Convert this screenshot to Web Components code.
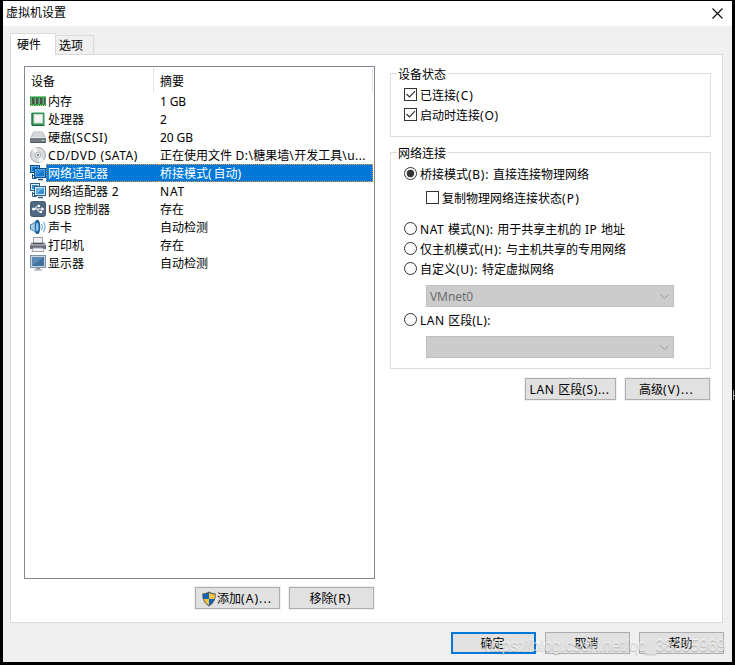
<!DOCTYPE html>
<html lang="zh-CN"><head><meta charset="utf-8"><title>虚拟机设置</title>
<style>html,body{margin:0;width:735px;height:665px;overflow:hidden;background:#000}
body{font:12px/16px "Noto Sans","Noto Sans CJK SC",sans-serif;color:#000}</style></head>
<body><vm-dialog></vm-dialog>
<script>
const define=(name,css,html,after)=>customElements.define(name,class extends HTMLElement{
  constructor(){super();this.attachShadow({mode:'open'})}
  connectedCallback(){
    this.shadowRoot.innerHTML='<style>*{box-sizing:border-box}:host{box-sizing:border-box}'+css+'</style>'+(typeof html==='function'?html(this):html);
    if(after)after(this);
  }
});
// Label whose Latin runs are spaced so that the whole label takes w pixels
define('ui-text',':host{display:inline-block;white-space:pre;flex:none;line-height:16px;height:16px}b{font-weight:inherit}',
 e=>e.getAttribute('t').replace(/[\x20-\x7e]+/g,m=>'<b>'+m+'</b>'),
 e=>{const w=+e.getAttribute('w');if(!w)return;
  const n=(e.getAttribute('t').match(/[\x20-\x7e]/g)||[]).length;
  if(!n)return;
  const s=(w-e.getBoundingClientRect().width)/n;
  e.shadowRoot.querySelectorAll('b').forEach(b=>b.style.letterSpacing=s+'px');});

const netIcon=(edge,light,mid,screen)=>`<rect x=".5" y=".5" width="9" height="7" fill="${light}" stroke="${edge}"/><rect x="2" y="2" width="6" height="4" fill="${mid}"/><path d="M2.500 9v4.500h4M2.500 10.500h2" stroke="${edge}" fill="none"/><rect x="4.500" y="3.500" width="11" height="9" fill="${light}" stroke="${edge}"/><rect x="6" y="5" width="8" height="6" fill="${mid}"/><path d="M6 11V5h8z" fill="${screen}"/><path d="M8 14.500h5" stroke="${edge}" stroke-width="1.500"/>`;
const icons={
 mem:'<path d="M0 3h16v10H0z" fill="#2f9a4a"/><path d="M0 3.500h16" stroke="#7ccf83"/><path d="M1 5h3v6H1zm4 0h3v6H5zm4 0h3v6H9zm4 0h2v6h-2z" fill="#46544a"/><path d="M1.500 5v6M5.500 5v6M9.500 5v6M13.500 5v6" stroke="#87998a"/><path d="M1 12.500h4m1 0h9" stroke="#e0d98a" stroke-dasharray="1 1"/>',
 cpu:'<rect x="1.500" y="1.500" width="13" height="13" rx="1" fill="#2f9655"/><rect x="3.500" y="3" width="9.500" height="9.500" fill="#cfd8cf"/><rect x="4.500" y="4" width="7.500" height="7.500" fill="#f5f6f1"/><path d="M2 2v12.500h12.500" stroke="#1c6b3b" fill="none"/>',
 disk:'<path d="M3.500 2.500h9L16 9H0z" fill="#b3b8be"/><path d="M4 3h8l2.500 5.500h-13z" fill="#d3d6da"/><path d="M0 8.500h16V14H0z" fill="#737a82"/><path d="M0 8.500h16" stroke="#e6e8ea"/><path d="M1 13.500h14" stroke="#4f565e"/><path d="M12 11.500h2" stroke="#a5f59a"/>',
 cd:'<circle cx="8" cy="8" r="7.500" fill="#d8dadd" stroke="#a6abb0"/><path d="M8 8L2 3a8 8 0 0 1 5-2.500zM8 8l6 5a8 8 0 0 1-5 2.500z" fill="#f4f5f6"/><circle cx="8" cy="8" r="2.800" fill="#eef0f2" stroke="#a3a7ad" stroke-width=".8"/><circle cx="8" cy="8" r="1.200" fill="#868c93"/>',
 net:netIcon('#2c5c84','#dceefb','#3391d4','#69b6e8'),
 netsel:netIcon('#0f4f8c','#5aa9e6','#1579cb','#2f8edb'),
 usb:'<rect x=".5" y=".5" width="15" height="15" rx="2" fill="#4f6982" stroke="#465a6e"/><path d="M3 8h9M5 8l2-3h2M7 8l2 3h2" fill="none" stroke="#fff"/><circle cx="3.500" cy="8" r="1.500" fill="#fff"/><path d="M11.500 6l3 2-3 2z" fill="#fff"/><circle cx="9" cy="5" r="1.200" fill="#fff"/><path d="M10 10h2v2h-2z" fill="#fff"/>',
 sound:'<path d="M0 5.500Q4 4 7 .5q4 7.500 0 15Q4 12 0 10.500z" fill="#4b7fa9"/><path d="M1 6q3-1 5-3.500v11Q4 11 1 10z" fill="#a9cee8"/><ellipse cx="7.500" cy="8" rx="2.800" ry="7.300" fill="#1f639b"/><ellipse cx="7.200" cy="8" rx="1.400" ry="4.300" fill="#8ac4ec"/><path d="M11.500 5q1.700 3 0 6M13.500 3q3 5 0 10" fill="none" stroke="#79b0da" stroke-width="1.200"/>',
 print:'<path d="M3.500 .5h9v6h-9z" fill="#f1f1f5" stroke="#9a9ca7"/><path d="M1 5.500h14l1 6H0z" fill="#8c8e99"/><path d="M0 8h16v4H0z" fill="#696b76"/><path d="M3 6.500h10" stroke="#44464f"/><path d="M1 8h14" stroke="#b9bbc3"/><path d="M3 11h10l1 3.500H2z" fill="#f7f7fa" stroke="#a0a2ab"/>',
 screen:'<rect x=".5" y=".5" width="15" height="12" fill="#c9d5e1" stroke="#7a91a8"/><rect x="2" y="2" width="12" height="9" fill="#40719f"/><path d="M2 11V2h12z" fill="#5c8bb5"/><path d="M6 13h4v1.500H6z" fill="#8c97a3"/><path d="M4 15h8" stroke="#8c97a3"/>',
 shield:'<path d="M8 .5Q11 2.500 14.700 2.500 15.200 11 8 15.500.8 11 1.300 2.500 5 2.500 8 .5z" fill="#4f5960"/><path d="M8 1.800V8H2.600Q2 6 2.300 3.500 5.500 3.500 8 1.800z" fill="#0b63ba"/><path d="M8 1.800V8h5.400q.6-2 .3-4.500Q10.500 3.500 8 1.800z" fill="#ffc43d"/><path d="M8 8v6.300Q4 12 2.600 8z" fill="#ffc43d"/><path d="M8 8v6.300Q12 12 13.400 8z" fill="#0b63ba"/>'
};
define('ui-icon',':host{display:block;flex:none;width:16px;height:16px}svg{display:block}',e=>`<svg width="16" height="16" viewBox="0 0 16 16">${icons[e.getAttribute('name')]}</svg>`);
define('ui-button',':host{display:flex;align-items:center;justify-content:center;width:85px;height:22px;background:#e1e1e1;border:1px solid #adadad;box-shadow:0 0 0 1px #f0f0f0;padding:2px 2px 0 0}:host([primary]){border:2px solid #0078d7}','<slot></slot>');
define('ui-option',':host{display:flex;height:20px;align-items:flex-start;padding-top:3px;gap:3px}svg{flex:none;display:block}',e=>{
 const c=e.hasAttribute('checked');
 return `<svg width="13" height="13">${e.getAttribute('kind')==='check'
 ?'<rect x=".5" y=".5" width="12" height="12" fill="#fff" stroke="#333"/>'+(c?'<path d="M2.500 6l3 3L11 3.200" fill="none" stroke="#333" stroke-width="1.200"/>':'')
 :'<circle cx="6.500" cy="6.500" r="6" fill="#fff" stroke="#333"/>'+(c?'<circle cx="6.500" cy="6.500" r="3.700" fill="#333"/>':'')}</svg><ui-text t="${e.getAttribute('t')}" w="${e.getAttribute('w')}"></ui-text>`});
define('ui-combo',':host{display:flex;align-items:center;justify-content:space-between;width:248px;height:22px;background:#ccc;border:1px solid #bfbfbf;padding:2px 4px 0 3px;color:#6d6d6d;margin-left:22px}svg{display:block}','<span><slot></slot></span><svg width="9" height="6"><path d="M.5 .5l4 4 4-4" fill="none" stroke="#999"/></svg>');
define('ui-group',':host{display:block;border:1px solid #dcdcdc;padding-left:13px}header{display:table;background:#fff;height:16px;margin:-7px 0 0 -7px;padding:0 2px 0 1px}',e=>`<header><ui-text t="${e.getAttribute('label')}"></ui-text></header><slot></slot>`);
define('device-row',':host{display:grid;grid-template-columns:17px 112px 1fr;height:18px;margin:0 1px 0 5px}ui-icon{margin-top:1px}span{padding-top:2px;height:18px}.s{padding-left:1px}.n{padding-left:1px}:host([selected]) span{background:#0078d7;color:#fff;border:1px dotted #e59a4e;border-left:0;padding-top:1px}:host([selected]) .n{border-right:0;border-left:1px dotted #e59a4e;margin-left:-1px}',e=>{
 const a=k=>e.getAttribute(k)||'';
 return `<ui-icon name="${a('icon')}"></ui-icon><span class="n"><ui-text t="${a('n')}" w="${a('nw')}"></ui-text></span><span class="s"><ui-text t="${a('s')}" w="${a('sw')}"></ui-text></span>`});
define('device-list',':host{display:block;width:351px;height:513px;border:1px solid #828790;background:#fff}header{display:grid;grid-template-columns:129px 219px;height:25px;padding-top:1px}header div{height:24px;border-right:1px solid #e2e2e2;padding:6px 0 0 6px}',
'<header><div><ui-text t="设备"></ui-text></div><div><ui-text t="摘要"></ui-text></div></header>'+[
 ['mem','内存','','1 GB',26],['cpu','处理器','','2',''],['disk','硬盘(SCSI)',60,'20 GB',33],['cd','CD/DVD (SATA)',90,'正在使用文件 D:\\糖果墙\\开发工具\\u...',206],['netsel','网络适配器','','桥接模式(自动)',83],['net','网络适配器 2',71,'NAT',25],['usb','USB 控制器',62,'存在',''],['sound','声卡','','自动检测',''],['print','打印机','','存在',''],['screen','显示器','','自动检测','']
].map((r,i)=>`<device-row icon="${r[0]}" n="${r[1]}" nw="${r[2]}" s="${r[3]}" sw="${r[4]}"${i===4?' selected':''}></device-row>`).join(''));
define('vm-tabs',':host{display:flex;align-items:flex-end;height:22px;position:relative}div{border:1px solid #d9d9d9;border-bottom:0}.on{width:46px;height:22px;background:#fff;padding:3px 0 0 6px}.off{width:38px;height:19px;background:#f0f0f0;border-left:0;margin-bottom:1px;padding:2px 0 0 3px}',
'<div class="on"><ui-text t="硬件"></ui-text></div><div class="off"><ui-text t="选项"></ui-text></div>');
define('hardware-page',':host{display:grid;grid-template-columns:351px 321px;column-gap:15px;width:713px;height:569px;border:1px solid #d9d9d9;background:#fff;padding:11px 0 0 13px;margin-top:-1px}.actions{display:flex;justify-content:flex-end;gap:9px;margin:8px 1px 0 0}.right{padding-top:7px}.state{height:64px}.network{height:217px;margin-top:15px}.nested{margin-left:22px}.right .actions{margin-top:9px}',
`<div><device-list></device-list><div class="actions"><ui-button><ui-icon name="shield"></ui-icon><ui-text t="添加(A)..." w="55"></ui-text></ui-button><ui-button><ui-text t="移除(R)" w="42"></ui-text></ui-button></div></div>
<div class="right"><ui-group class="state" label="设备状态"><ui-option style="margin-top:2px" kind="check" checked t="已连接(C)" w="54"></ui-option><ui-option kind="check" checked t="启动时连接(O)" w="79"></ui-option></ui-group>
<ui-group class="network" label="网络连接"><ui-option style="margin-top:2px" checked t="桥接模式(B): 直接连接物理网络" w="169"></ui-option><ui-option style="margin-top:4px" class="nested" kind="check" t="复制物理网络连接状态(P)" w="138"></ui-option><ui-option style="margin-top:11px" t="NAT 模式(N): 用于共享主机的 IP 地址" w="205"></ui-option><ui-option t="仅主机模式(H): 与主机共享的专用网络" w="206"></ui-option><ui-option t="自定义(U): 特定虚拟网络" w="134"></ui-option><ui-combo style="margin-top:6px"><ui-text t="VMnet0" w="43"></ui-text></ui-combo><ui-option style="margin-top:3px" t="LAN 区段(L):" w="71"></ui-option><ui-combo style="margin-top:6px"></ui-combo></ui-group>
<div class="actions"><ui-button style="width:91px"><ui-text t="LAN 区段(S)..." w="80"></ui-text></ui-button><ui-button><ui-text t="高级(V)..." w="55"></ui-text></ui-button></div></div>`);
define('vm-dialog',':host{display:block;width:735px;height:665px;padding:1px 0 0 3px;background:#000;position:relative}main{width:729px;height:661px;background:#f0f0f0}.title{height:25px;background:#fff;display:flex;justify-content:space-between;padding:4px 9px 0 3px}.title svg{margin-top:3px}.body{padding:7px 0 0 7px}.foot{display:flex;justify-content:flex-end;gap:9px;padding:9px 8px 0 0}.mark{position:absolute;left:484px;top:636px;font:16px/20px "Liberation Sans",sans-serif;letter-spacing:-.12px;color:#ffffffa8;text-shadow:0 1px 1px #0000003c;white-space:nowrap}.edge{position:absolute;left:733px;top:390px}',
`<main><div class="title"><ui-text t="虚拟机设置"></ui-text><svg width="11" height="11"><path d="M.5 .5l10 10M10.500 .5l-10 10" stroke="#111" stroke-width="1.200"/></svg></div><div class="body"><vm-tabs></vm-tabs><hardware-page></hardware-page><div class="foot"><ui-button primary><ui-text t="确定"></ui-text></ui-button><ui-button><ui-text t="取消"></ui-text></ui-button><ui-button><ui-text t="帮助"></ui-text></ui-button></div></div></main><div class="mark">https://blog.csdn.net/qq_38395969</div><svg class="edge" width="2" height="10"><path d="M.5 0v10M1 5.500h1" stroke="#aaa"/></svg>`);
</script></body></html>
